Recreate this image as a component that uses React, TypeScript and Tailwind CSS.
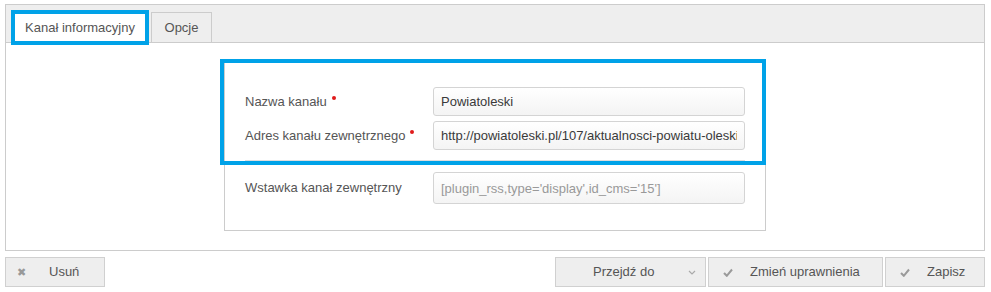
import React from "react";

const font = { fontFamily: '"Liberation Sans", Arial, sans-serif' };

const Required = (): JSX.Element => (
  <span className="ml-[5px] inline-block h-[4px] w-[4px] -translate-y-[6px] rounded-full bg-[#e01b1b]" />
);

const Field = ({
  label,
  value,
  required,
  muted,
  tall
}: {
  label: string;
  value: string;
  required?: boolean;
  muted?: boolean;
  tall?: boolean;
}): JSX.Element => (
  <div className="flex items-center">
    <div className="w-[188px] shrink-0 text-[13px] text-[#555]">
      {label}
      {required && <Required />}
    </div>
    <input
      readOnly
      value={value}
      className={`w-[312px] rounded-[3px] border border-[#d4d4d4] bg-gradient-to-b from-white to-[#f4f4f4] px-[7px] text-[13px] outline-none ${
        tall ? "h-[32px]" : "h-[29px]"
      } ${muted ? "text-[#999]" : "text-[#3a3a3a]"}`}
      style={font}
    />
  </div>
);

const Btn = ({
  icon,
  label,
  width,
  trailing
}: {
  icon?: React.ReactNode;
  label: string;
  width: string;
  trailing?: React.ReactNode;
}): JSX.Element => (
  <button
    type="button"
    className={`flex h-[30px] items-center border border-[#d0d0d0] bg-[#eeeeee] text-[13px] text-[#555] ${width}`}
  >
    {icon}
    {label}
    {trailing}
  </button>
);

const CheckIcon = (): JSX.Element => (
  <svg width="10" height="9" viewBox="0 0 10 9" className="ml-[14px] mr-[17px] shrink-0" aria-hidden="true">
    <path d="M1 5 L3.8 7.8 L9 1.5" fill="none" stroke="#9a9a9a" strokeWidth="2" />
  </svg>
);

const App = (): JSX.Element => {
  return (
    <div className="min-h-[292px] bg-white px-[5px] pt-[4px]" style={font}>
      <div className="w-[980px] border border-[#cccccc]">
        {/* tabs */}
        <div className="flex h-[38px] items-end gap-[2px] border-b border-[#cccccc] bg-[#eeeeee] pl-[5px]">
          <div className="-mb-[3px] flex h-[35px] w-[138px] items-center justify-center border-4 border-[#00a2e8] bg-white text-[13px] text-[#555]">
            Kanał informacyjny
          </div>
          <div className="flex h-[30px] w-[61px] items-center justify-center border border-b-0 border-[#cccccc] bg-[#eeeeee] text-[13px] text-[#555]">
            Opcje
          </div>
        </div>

        {/* content */}
        <div className="flex justify-center py-[19px]">
          <div className="relative w-[542px] border border-[#cccccc]">
            <div className="mx-[20px] flex flex-col gap-[5px] border-b border-[#dddddd] pb-[10px] pt-[24px]">
              <Field label="Nazwa kanału" value="Powiatoleski" required />
              <Field
                label="Adres kanału zewnętrznego"
                value="http://powiatoleski.pl/107/aktualnosci-powiatu-oleskiego"
                required
              />
            </div>
            <div className="mx-[20px] pb-[26px] pt-[11px]">
              <Field
                label="Wstawka kanał zewnętrzny"
                value="[plugin_rss,type='display',id_cms='15']"
                muted
                tall
              />
            </div>
            <div className="pointer-events-none absolute -left-[5px] -top-[4px] h-[106px] w-[546px] border-4 border-[#00a2e8]" />
          </div>
        </div>
      </div>

      {/* footer buttons */}
      <div className="mt-[6px] flex w-[980px] justify-between">
        <Btn
          width="w-[100px]"
          label="Usuń"
          icon={<span className="ml-[11px] mr-[23px] text-[11px] text-[#999]">✖</span>}
        />
        <div className="flex gap-[2px]">
          <Btn
            width="w-[151px] pl-[37px]"
            label="Przejdź do"
            trailing={
              <svg width="8" height="5" viewBox="0 0 8 5" className="ml-[34px]" aria-hidden="true">
                <path d="M1 1 L4 4 L7 1" fill="none" stroke="#aaa" strokeWidth="1.2" />
              </svg>
            }
          />
          <Btn width="w-[175px]" label="Zmień uprawnienia" icon={<CheckIcon />} />
          <Btn width="w-[100px]" label="Zapisz" icon={<CheckIcon />} />
        </div>
      </div>
    </div>
  );
};

export default App;
